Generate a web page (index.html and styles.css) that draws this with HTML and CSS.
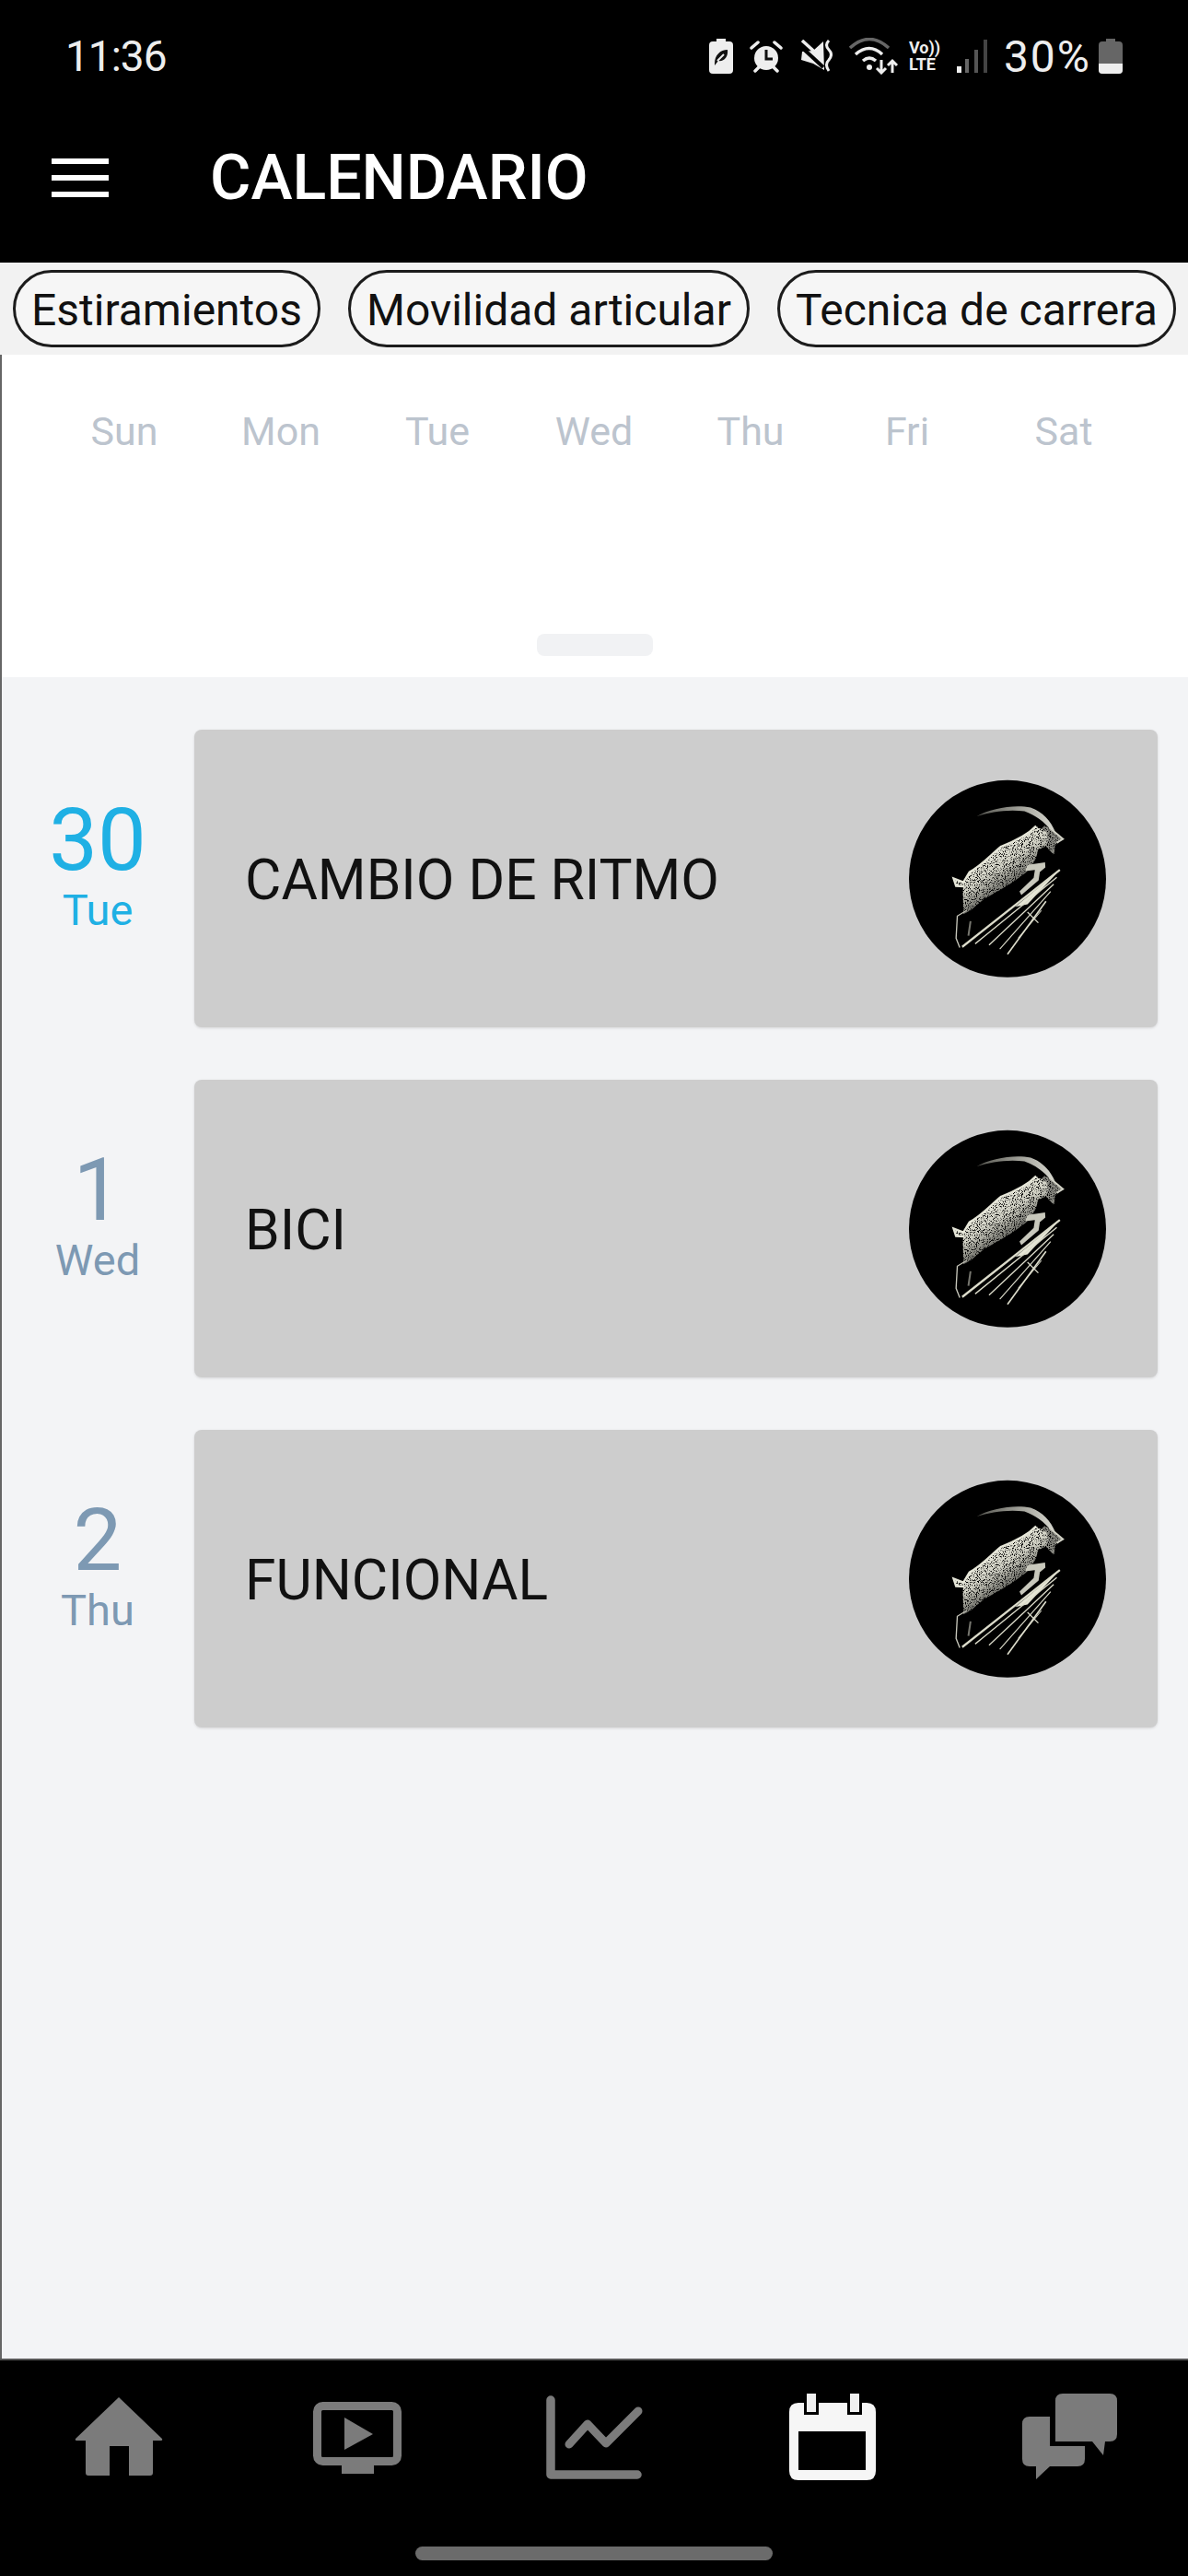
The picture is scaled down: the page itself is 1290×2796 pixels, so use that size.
FILE: index.html
```html
<!DOCTYPE html>
<html lang="en">
<head>
    <meta charset="UTF-8">
    <meta name="viewport" content="width=device-width, initial-scale=1.0">
    <title>Calendario</title>
    <link rel="stylesheet" href="styles.css">
</head>
<body>
    <!-- goat logo, reused on every card -->
    <svg class="defs" width="0" height="0">
        <defs>
            <linearGradient id="goatFill" gradientUnits="userSpaceOnUse" x1="350" y1="240" x2="480" y2="430">
                <stop offset="0" stop-color="#f2f2e4"/>
                <stop offset="0.4" stop-color="#d0d0c4"/>
                <stop offset="0.68" stop-color="#6a6a64"/>
                <stop offset="0.95" stop-color="#050505"/>
            </linearGradient>
            <linearGradient id="hornFill" x1="0" y1="0" x2="1" y2="0">
                <stop offset="0" stop-color="#55554f"/>
                <stop offset="0.6" stop-color="#a8a8a0"/>
                <stop offset="1" stop-color="#d8d8d0"/>
            </linearGradient>
            <filter id="speckle" x="0" y="0" width="1" height="1">
                <feTurbulence type="fractalNoise" baseFrequency="0.3" numOctaves="2" seed="4" result="noise"/>
                <feColorMatrix in="noise" type="matrix" values="0 0 0 0 0  0 0 0 0 0  0 0 0 0 0  0 0 0 6 -1.9" result="dots"/>
                <feComposite in="SourceGraphic" in2="dots" operator="in"/>
                <feGaussianBlur stdDeviation="1"/>
            </filter>
            <filter id="soft" x="-0.05" y="-0.05" width="1.1" height="1.1">
                <feGaussianBlur stdDeviation="1.6"/>
            </filter>
            <symbol id="goat" viewBox="85 45 640 645">
                <circle cx="405" cy="367" r="320" fill="#000"/>
                <path d="M305 164 C350 138 430 124 480 136 C520 150 545 180 560 214 L548 212 C525 182 495 160 460 148 C410 140 350 150 305 164Z" fill="url(#hornFill)" filter="url(#soft)"/>
                <path d="M525 195 L550 205 L585 238 L560 258 L556 290 L530 262 L505 215Z" fill="#85857e" filter="url(#speckle)"/>
                <path d="M498 196 L530 215 C545 245 530 270 505 270 C500 300 485 335 450 358 C405 392 365 412 330 432 C305 452 290 470 262 482 C262 440 258 410 262 392 L238 390 L230 366 L262 378 L282 345 C320 325 350 290 385 262 C430 245 470 225 498 196Z" fill="url(#goatFill)" filter="url(#speckle)"/>
                <g filter="url(#soft)">
                    <path d="M498 196 C470 225 430 245 385 262 C350 290 320 325 282 345 L262 378 L230 366 L238 390 L264 392" fill="none" stroke="#e6e6d8" stroke-width="7"/>
                    <path d="M540 200 L585 238 L565 250" fill="none" stroke="#d0d0c4" stroke-width="6"/>
                    <path d="M470 322 L527 314 L528 330 L510 345 L506 372 L450 420 L444 408 L490 364 L494 338 L462 342Z" fill="#c8c8bc"/>
                    <path d="M272 470 L242 488 L238 560 L250 590" fill="none" stroke="#c8c8bc" stroke-width="4"/>
                    <path d="M285 505 L278 552" fill="none" stroke="#77776f" stroke-width="6"/>
                    <path d="M575 338 L470 450 L430 458Z" fill="#e6e6d6"/>
                    <g fill="none" stroke="#dcdccb">
                        <path d="M575 338 L258 588" stroke-width="7"/>
                        <path d="M565 362 L300 578" stroke-width="4"/>
                        <path d="M555 385 L345 582" stroke-width="4"/>
                        <path d="M545 408 L380 595" stroke-width="3.5"/>
                        <path d="M530 440 L405 612" stroke-width="5"/>
                        <path d="M515 470 L440 560" stroke-width="3"/>
                        <path d="M470 475 L505 510" stroke-width="4"/>
                    </g>
                </g>
            </symbol>
        </defs>
    </svg>

    <header class="app-header">
        <div class="status-bar">
            <span class="clock">11:36</span>
            <div class="status-icons">
                <svg width="26" height="38" viewBox="0 0 26 38">
                    <path d="M8 0h10v3h4q4 0 4 4v27q0 4-4 4H4q-4 0-4-4V7q0-4 4-4h4z" fill="#eee"/>
                    <path d="M6 27C6 18 12 12 20 12C21 20 16 25 10 24L6 29Z" fill="#111"/>
                    <path d="M9 24L16 17" stroke="#eee" stroke-width="2"/>
                </svg>
                <svg width="36" height="36" viewBox="0 0 36 36">
                    <circle cx="18" cy="20" r="13" fill="#eee"/>
                    <path d="M18 11v10h7" fill="none" stroke="#111" stroke-width="3"/>
                    <path d="M2 9L9 3M34 9L27 3M6 34l4-4M30 34l-4-4" stroke="#eee" stroke-width="3.5" stroke-linecap="round"/>
                </svg>
                <svg width="36" height="36" viewBox="0 0 36 36">
                    <path d="M3 13L15 12L26 2L27 33L15 26L2 22Z" fill="#eee"/>
                    <path d="M0 6L26 30" stroke="#000" stroke-width="4"/>
                    <path d="M3 1L24 20" stroke="#eee" stroke-width="3.5"/>
                    <path d="M32 1q-5 5 0 10t0 11q-5 5 0 12" fill="none" stroke="#eee" stroke-width="3"/>
                </svg>
                <svg class="wifi-icon" width="54" height="40" viewBox="0 0 54 40">
                    <path d="M1 11Q22-8 43 11" fill="none" stroke="#666" stroke-width="3.5"/>
                    <path d="M7 18Q22 5 36 18" fill="none" stroke="#eee" stroke-width="3.5"/>
                    <path d="M15 25Q22 19 29 25" fill="none" stroke="#eee" stroke-width="3.5"/>
                    <circle cx="22" cy="32" r="3" fill="#eee"/>
                    <path d="M35 24v14M30 33l5 5 5-5M47 38V25M42 30l5-5 5 5" fill="none" stroke="#eee" stroke-width="3"/>
                </svg>
                <div class="volte"><span>Vo))</span><span>LTE</span></div>
                <svg width="33" height="36" viewBox="0 0 33 36">
                    <rect x="0" y="29" width="5" height="7" fill="#eee"/>
                    <rect x="9" y="21" width="4" height="15" fill="#666"/>
                    <rect x="19" y="11" width="4" height="25" fill="#555"/>
                    <rect x="29" y="0" width="4" height="36" fill="#444"/>
                </svg>
                <span class="battery-pct">30%</span>
                <svg width="26" height="38" viewBox="0 0 26 38">
                    <path d="M8 0h10v3h4q4 0 4 4v27q0 4-4 4H4q-4 0-4-4V7q0-4 4-4h4z" fill="#666"/>
                    <path d="M0 27h26v7q0 4-4 4H4q-4 0-4-4z" fill="#eee"/>
                </svg>
            </div>
        </div>
        <div class="toolbar">
            <div class="menu-btn"><span></span><span></span><span></span></div>
            <h1 class="page-title">CALENDARIO</h1>
        </div>
    </header>

    <div class="chips">
        <div class="chip">Estiramientos</div>
        <div class="chip">Movilidad articular</div>
        <div class="chip">Tecnica de carrera</div>
    </div>

    <main class="content">
        <section class="week">
            <div class="week-days">
                <span>Sun</span><span>Mon</span><span>Tue</span><span>Wed</span><span>Thu</span><span>Fri</span><span>Sat</span>
            </div>
            <div class="week-handle"></div>
        </section>

        <section class="agenda">
            <div class="agenda-row">
                <div class="date today">
                    <div class="date-num">30</div>
                    <div class="date-day">Tue</div>
                </div>
                <div class="card">
                    <span class="card-title">CAMBIO DE RITMO</span>
                    <svg class="card-logo"><use href="#goat"/></svg>
                </div>
            </div>
            <div class="agenda-row">
                <div class="date">
                    <div class="date-num">1</div>
                    <div class="date-day">Wed</div>
                </div>
                <div class="card">
                    <span class="card-title">BICI</span>
                    <svg class="card-logo"><use href="#goat"/></svg>
                </div>
            </div>
            <div class="agenda-row">
                <div class="date">
                    <div class="date-num">2</div>
                    <div class="date-day">Thu</div>
                </div>
                <div class="card">
                    <span class="card-title">FUNCIONAL</span>
                    <svg class="card-logo"><use href="#goat"/></svg>
                </div>
            </div>
        </section>
    </main>

    <footer class="tabbar">
        <nav class="tabs">
            <div class="tab">
                <svg width="100" height="100" viewBox="0 0 100 100">
                    <path d="M50 7L97 52Q98 54 95 54H87V89Q87 92 84 92H61V60H40V92H17Q14 92 14 89V54H5Q2 54 3 52Z" fill="#7b7b7b"/>
                </svg>
            </div>
            <div class="tab">
                <svg width="100" height="100" viewBox="0 0 100 100">
                    <rect x="7.5" y="16.5" width="87" height="60" rx="6" fill="none" stroke="#7b7b7b" stroke-width="9"/>
                    <rect x="34" y="81" width="35" height="9" fill="#7b7b7b"/>
                    <path d="M37 29L68 47L37 64Z" fill="#7b7b7b"/>
                </svg>
            </div>
            <div class="tab">
                <svg width="110" height="100" viewBox="0 0 110 100">
                    <path d="M8 10V91H102" fill="none" stroke="#7b7b7b" stroke-width="9.5" stroke-linecap="round" stroke-linejoin="round"/>
                    <path d="M28 58L48 36L68 57L103 22" fill="none" stroke="#7b7b7b" stroke-width="9" stroke-linecap="round" stroke-linejoin="round"/>
                </svg>
            </div>
            <div class="tab">
                <svg width="100" height="100" viewBox="0 0 100 100">
                    <path fill-rule="evenodd" d="M14 13H88Q98 13 98 23V87Q98 97 88 97H14Q4 97 4 87V23Q4 13 14 13ZM14 44V86H87V44Z" fill="#f6f6f6"/>
                    <rect x="20" y="10" width="16" height="16" fill="#000"/>
                    <rect x="67" y="10" width="16" height="16" fill="#000"/>
                    <rect x="23" y="3" width="10" height="20" fill="#f0f0f0"/>
                    <rect x="70" y="3" width="10" height="20" fill="#f0f0f0"/>
                </svg>
            </div>
            <div class="tab">
                <svg width="110" height="100" viewBox="0 0 110 100">
                    <path d="M48 3H99Q107 3 107 11V47Q107 55 99 55H94L92 70L80 55H40V11Q40 3 48 3Z" fill="#7b7b7b"/>
                    <path d="M12 28H34V60H72V74Q72 82 64 82H34L19 96V82H12Q4 82 4 74V36Q4 28 12 28Z" fill="#7b7b7b"/>
                </svg>
            </div>
        </nav>
        <div class="home-bar"></div>
    </footer>
</body>
</html>
```

FILE: styles.css
```css
* {
    box-sizing: border-box;
}

body {
    margin: 0;
    width: 1290px;
    height: 2796px;
    display: flex;
    flex-direction: column;
    background: #000;
    font-family: Roboto, "Liberation Sans", sans-serif;
    overflow: hidden;
}

.defs {
    display: block;
    height: 0;
}

/* header */
.app-header {
    height: 285px;
    background: #000;
    color: #fff;
}

.status-bar {
    height: 122px;
    display: flex;
    align-items: center;
    justify-content: space-between;
    padding: 0 71px 0 71px;
}

.clock {
    font-size: 46px;
    letter-spacing: -1px;
    color: #eee;
}

.status-icons {
    display: flex;
    align-items: center;
    gap: 18px;
}

.wifi-icon {
    margin-right: -7px;
}

.volte {
    display: flex;
    flex-direction: column;
    width: 36px;
    color: #eee;
    font-size: 18px;
    font-weight: 700;
    line-height: 18px;
    margin-right: -2px;
}

.battery-pct {
    font-size: 48px;
    letter-spacing: 2px;
    color: #eee;
    margin-right: -10px;
}

.toolbar {
    height: 163px;
    padding: 0 0 22px 56px;
    display: flex;
    align-items: center;
}

.menu-btn {
    width: 62px;
    height: 42px;
    display: flex;
    flex-direction: column;
    justify-content: space-between;
}

.menu-btn span {
    height: 6px;
    background: #fff;
}

.page-title {
    margin: 0 0 0 110px;
    font-size: 68px;
    font-weight: 500;
}

/* filter chips */
.chips {
    height: 100px;
    background: #f2f2f2;
    display: flex;
    align-items: center;
    gap: 30px;
    padding: 0 14px;
}

.chip {
    height: 84px;
    display: flex;
    align-items: center;
    padding: 2px 17px 0;
    border: 3px solid #1c1c1c;
    border-radius: 42px;
    background: #f6f6f6;
    font-size: 48px;
    color: #111;
    white-space: nowrap;
}

/* week strip + agenda */
.content {
    flex: 1;
    display: flex;
    flex-direction: column;
    border-left: 2px solid #666;
    background: #f3f4f6;
}

.week {
    height: 350px;
    background: #fff;
    display: flex;
    flex-direction: column;
    align-items: center;
}

.week-days {
    width: 100%;
    padding: 58px 48px 0;
    display: grid;
    grid-template-columns: repeat(7, 170px);
    justify-items: center;
    font-size: 43px;
    line-height: 50px;
    color: #bcc4ce;
}

.week-handle {
    width: 126px;
    height: 24px;
    margin-top: 195px;
    border-radius: 8px;
    background: #f1f2f4;
}

.agenda {
    padding-top: 57px;
    display: flex;
    flex-direction: column;
    gap: 57px;
}

.agenda-row {
    display: flex;
}

.date {
    width: 208px;
    padding-bottom: 28px;
    display: flex;
    flex-direction: column;
    align-items: center;
    justify-content: center;
    color: #7d99b3;
}

.date-num {
    font-size: 94px;
    line-height: 96px;
}

.date-day {
    font-size: 47px;
    line-height: 56px;
}

.today {
    color: #1fb0e4;
}

.card {
    width: 1046px;
    height: 323px;
    margin-left: 1px;
    padding: 0 56px 0 55px;
    display: flex;
    align-items: center;
    justify-content: space-between;
    border-radius: 8px;
    background: #cdcdcd;
    box-shadow: 0 1px 3px rgba(0, 0, 0, 0.12);
}

.card-title {
    padding-top: 4px;
    font-size: 60.5px;
    color: #111;
}

.card-logo {
    width: 214px;
    height: 216px;
}

/* bottom tabs */
.tabbar {
    height: 236px;
    background: #000;
    border-top: 2px solid #555;
    display: flex;
    flex-direction: column;
    align-items: center;
}

.tabs {
    width: 100%;
    height: 100px;
    margin-top: 33px;
    display: grid;
    grid-template-columns: repeat(5, 258px);
}

.tab {
    display: flex;
    justify-content: center;
}

.home-bar {
    width: 388px;
    height: 15px;
    margin-top: 69px;
    border-radius: 8px;
    background: #6b6b6b;
}
```
